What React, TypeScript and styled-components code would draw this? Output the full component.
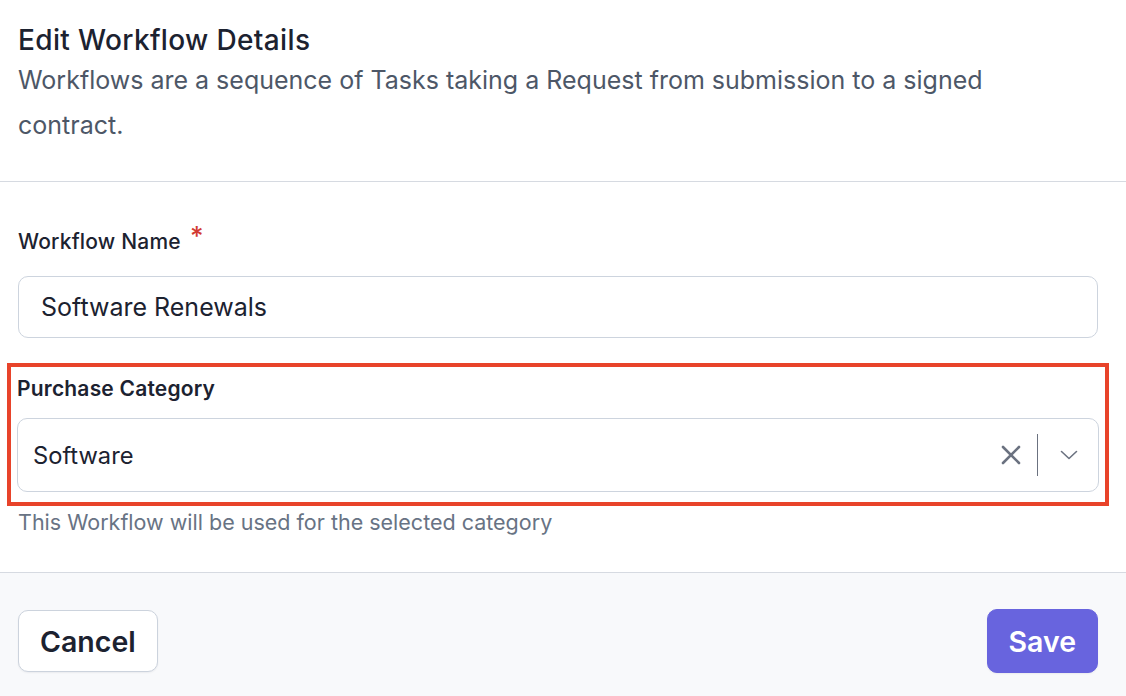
import React from "react";
import styled, { createGlobalStyle } from "styled-components";

const GlobalStyle = createGlobalStyle`
  html, body {
    margin: 0;
    padding: 0;
    background: #ffffff;
    font-family: Inter, "Noto Sans", sans-serif;
    overflow: hidden;
  }
  * {
    box-sizing: border-box;
  }
`;

const Page = styled.div`
  width: 1126px;
  height: 696px;
  display: flex;
  flex-direction: column;
  overflow: hidden;
`;

const Header = styled.header`
  padding: 22px 18px 33px;
  border-bottom: 1px solid #d6dae1;
`;

const Title = styled.h2`
  margin: 0;
  font-size: 28px;
  line-height: 36px;
  font-weight: 500;
  letter-spacing: 0.35px;
  color: #1c2230;
`;

const Description = styled.p`
  margin: 0;
  max-width: 1000px;
  font-size: 25px;
  line-height: 45px;
  font-weight: 400;
  color: #4d5767;
`;

const Body = styled.div`
  padding: 45px 28px 36px 18px;
  display: flex;
  flex-direction: column;
`;

const Field = styled.div`
  display: flex;
  flex-direction: column;
  gap: 19px;
`;

const Label = styled.label<{ $weight?: number }>`
  font-size: 21px;
  line-height: 30px;
  letter-spacing: 0.2px;
  font-weight: ${(p) => p.$weight ?? 500};
  color: #1c2230;
`;

const Required = styled.span`
  color: #d23a32;
  margin-left: 9px;
  font-size: 26px;
  line-height: 0;
  position: relative;
  top: -4px;
`;

const TextInput = styled.div`
  height: 62px;
  border: 1px solid #cdd4de;
  border-radius: 10px;
  padding: 0 22px;
  display: flex;
  align-items: center;
  font-size: 25px;
  color: #1c2230;
  background: #fff;
`;

const Highlight = styled.div`
  margin: 25px -11px 0;
  padding: 7px 6px 10px;
  border: 4.5px solid #e8432a;
  display: flex;
  flex-direction: column;
  gap: 14px;
`;

const Select = styled.div`
  height: 74px;
  border: 1px solid #cdd4de;
  border-radius: 10px;
  display: flex;
  align-items: center;
  padding: 0 20px 0 15px;
  background: #fff;
`;

const SelectValue = styled.span`
  flex: 1;
  font-size: 23.7px;
  color: #1c2230;
`;

const Indicators = styled.div`
  display: flex;
  align-items: center;
`;

const Separator = styled.span`
  width: 1.5px;
  height: 42px;
  background: #6b7280;
  margin: 0 22px 0 15px;
`;

const Helper = styled.p`
  margin: 0;
  padding-top: 2px;
  font-size: 21.5px;
  line-height: 28px;
  color: #687384;
`;

const Footer = styled.footer`
  flex: 1;
  background: #f8f9fb;
  border-top: 1px solid #d6dae1;
  display: flex;
  justify-content: space-between;
  align-items: flex-start;
  padding: 36px 28px 0 18px;
`;

const Button = styled.button<{ $primary?: boolean }>`
  font-family: Inter, "Noto Sans", sans-serif;
  font-size: 28.5px;
  font-weight: 600;
  height: ${(p) => (p.$primary ? 64 : 62)}px;
  margin-top: ${(p) => (p.$primary ? 0 : 1)}px;
  padding: 0 21px;
  border-radius: 10px;
  border: 1px solid ${(p) => (p.$primary ? "#6864de" : "#ccd3dd")};
  background: ${(p) => (p.$primary ? "#6864de" : "#ffffff")};
  color: ${(p) => (p.$primary ? "#ffffff" : "#1c2230")};
  box-shadow: 0 1px 2px rgba(16, 24, 40, 0.06);
`;

const ClearIcon = () => (
  <svg width="22" height="22" viewBox="0 0 22 22" fill="none">
    <path d="M3 3 L19 19 M19 3 L3 19" stroke="#6b7280" strokeWidth="2.6" strokeLinecap="round" />
  </svg>
);

const ChevronIcon = () => (
  <svg width="18" height="10" viewBox="0 0 18 10" fill="none">
    <path d="M1.5 1.5 L9 8.5 L16.5 1.5" stroke="#6b7280" strokeWidth="1.6" strokeLinecap="round" strokeLinejoin="round" />
  </svg>
);

export default function App() {
  return (
    <>
      <GlobalStyle />
      <Page>
        <Header>
          <Title>Edit Workflow Details</Title>
          <Description>
            Workflows are a sequence of Tasks taking a Request from submission to a signed contract.
          </Description>
        </Header>
        <Body>
          <Field>
            <Label>
              Workflow Name<Required>*</Required>
            </Label>
            <TextInput>Software Renewals</TextInput>
          </Field>
          <Highlight>
            <Label $weight={600}>Purchase Category</Label>
            <Select>
              <SelectValue>Software</SelectValue>
              <Indicators>
                <ClearIcon />
                <Separator />
                <ChevronIcon />
              </Indicators>
            </Select>
          </Highlight>
          <Helper>This Workflow will be used for the selected category</Helper>
        </Body>
        <Footer>
          <Button>Cancel</Button>
          <Button $primary>Save</Button>
        </Footer>
      </Page>
    </>
  );
}
